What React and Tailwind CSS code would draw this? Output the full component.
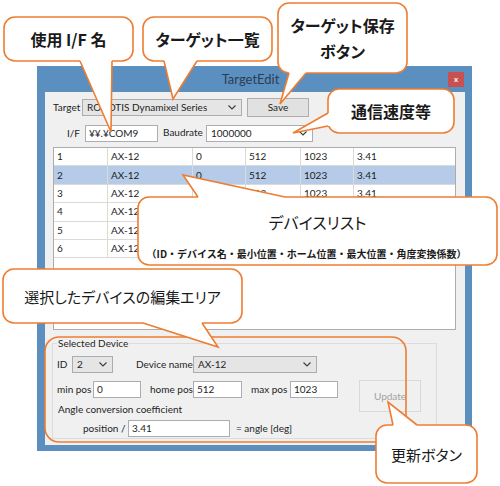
const ORANGE = "#ed7d31";

// callout boxes drawn over the window; tails point at the control
const callouts = [
  { x: 4, y: 17, w: 129, h: 44, b1: [80, 61], b2: [112, 61], tip: [111, 132], dir: [0, -1] },
  { x: 143, y: 17, w: 129, h: 44, b1: [164, 61], b2: [197, 61], tip: [173, 99], dir: [0, -1] },
  { x: 278, y: 3, w: 129, h: 70, b1: [289, 73], b2: [306, 73], tip: [280, 104], dir: [0, -1] },
  { x: 328, y: 89, w: 126, h: 44, b1: [328, 113], b2: [328, 126], tip: [293, 133], dir: [1, 0] },
  { x: 138, y: 197, w: 359, h: 68, b1: [198, 197], b2: [285, 197], tip: [183, 175], dir: [0, 1] },
  { x: 3, y: 269, w: 239, h: 54, b1: [143, 323], b2: [202, 323], tip: [218, 347], dir: [0, -1] },
  { x: 376, y: 425, w: 101, h: 58, b1: [393, 425], b2: [417, 425], tip: [388, 402], dir: [0, 1] },
];

function Chevron() {
  return (
    <svg width="8" height="5" viewBox="0 0 8 5" className="shrink-0">
      <path d="M0.5 0.5 L4 4 L7.5 0.5" fill="none" stroke="#3c3c3c" strokeWidth="1.1" />
    </svg>
  );
}

function Combo({ className, value, editable }) {
  return (
    <div
      className={
        "flex items-center justify-between h-[17px] border pl-[4px] pr-[5px] " +
        (editable ? "bg-white border-[#abadb3] " : "bg-[#e5e5e5] border-[#acacac] ") +
        className
      }
    >
      <span className="whitespace-nowrap overflow-hidden">{value}</span>
      <Chevron />
    </div>
  );
}

function Field({ className, value }) {
  return (
    <div className={"flex items-center h-[17px] bg-white border border-[#abadb3] pl-[3px] " + className}>
      {value}
    </div>
  );
}

const rows = [1, 2, 3, 4, 5, 6];

function DeviceTable() {
  return (
    <div className="mt-[5px] w-[403px] h-[183px] bg-white border border-[#adadad]">
      {rows.map((id) => (
        <div
          key={id}
          className={
            "flex h-[18.4px] border-b border-[#dadada] " + (id === 2 ? "bg-[#b5cbe8]" : "")
          }
        >
          <div className="w-[54px] pl-[3px] border-r border-[#dadada] flex items-center">{id}</div>
          <div className="w-[85px] pl-[3px] border-r border-[#dadada] flex items-center">AX-12</div>
          <div className="w-[53px] pl-[3px] border-r border-[#dadada] flex items-center">0</div>
          <div className="w-[55px] pl-[3px] border-r border-[#dadada] flex items-center">512</div>
          <div className="w-[53px] pl-[3px] border-r border-[#dadada] flex items-center">1023</div>
          <div className="flex-1 pl-[3px] flex items-center">3.41</div>
        </div>
      ))}
    </div>
  );
}

function Window() {
  return (
    <div className="w-[435px] h-[385px] bg-[#5b8fbf] flex flex-col">
      {/* title bar */}
      <div className="h-[26px] flex items-center">
        <div className="flex-1" />
        <div className="text-[13px] text-[#2b3d52]">TargetEdit</div>
        <div className="flex-1 flex justify-end pr-[8px]">
          <div className="w-[16px] h-[15px] bg-[#c75050] flex items-center justify-center text-white text-[8px] font-bold leading-none">
            x
          </div>
        </div>
      </div>

      <div className="ml-[8px] mr-[7px] mb-[6px] flex-1 bg-[#f0f0f0] pl-[8px] pt-[6px]">
        <div className="flex items-center h-[19px]">
          <span className="w-[29px]">Target</span>
          <Combo className="w-[160px]" value="ROBOTIS Dynamixel Series" />
          <div className="ml-[5px] w-[62px] h-[19px] bg-[#e1e1e1] border border-[#adadad] flex items-center justify-center">
            Save
          </div>
        </div>

        <div className="flex items-center h-[17px] mt-[8px]">
          <span className="w-[32px] text-right pr-[5px]">I/F</span>
          <Field className="w-[73px]" value="¥¥.¥COM9" />
          <span className="ml-[5px] w-[43px] -mt-[3px]">Baudrate</span>
          <Combo className="w-[107px]" value="1000000" editable />
        </div>

        <DeviceTable />

        <fieldset className="mt-[7px] -ml-[1px] w-[385px] border border-[#dcdcdc] pl-[4px] pb-[1px]">
          <legend className="px-[1px]">Selected Device</legend>
          <div className="flex items-center h-[17px] mt-[6px]">
            <span className="w-[15px]">ID</span>
            <Combo className="w-[41px]" value="2" />
            <span className="ml-[23px] w-[57px]">Device name</span>
            <Combo className="w-[124px]" value="AX-12" />
          </div>
          <div className="flex items-start mt-[8px]">
            <div className="flex flex-col">
              <div className="flex items-center h-[17px]">
                <span className="w-[36px]">min pos</span>
                <Field className="w-[48px]" value="0" />
                <span className="ml-[9px] w-[43px]">home pos</span>
                <Field className="w-[49px]" value="512" />
                <span className="ml-[9px] w-[39px]">max pos</span>
                <Field className="w-[48px]" value="1023" />
              </div>
              <div className="mt-[4px] leading-[14px] pl-[1px]">Angle conversion coefficient</div>
            </div>
            <div className="ml-[21px] -mt-[1px] w-[62px] h-[32px] border border-[#d9d9d9] bg-[#f0f0f0] flex items-center justify-center text-[#a3a3a3]">
              Update
            </div>
          </div>
          <div className="flex items-center h-[17px] mt-[4px]">
            <span className="ml-[26px] w-[45px]">position /</span>
            <Field className="w-[102px]" value="3.41" />
            <span className="ml-[6px]">= angle [deg]</span>
          </div>
        </fieldset>
      </div>
    </div>
  );
}

function CalloutShapes() {
  return (
    <svg className="absolute inset-0 pointer-events-none" width="500" height="486" viewBox="0 0 500 486">
      {/* highlight of the edit area */}
      <rect x="45" y="337" width="361" height="105" rx="14" fill="none" stroke={ORANGE} strokeWidth="1.6" />
      {callouts.map((c, i) => {
        const [dx, dy] = c.dir;
        const cover = [
          [c.b1[0] + dx * 3, c.b1[1] + dy * 3],
          c.b1,
          c.tip,
          c.b2,
          [c.b2[0] + dx * 3, c.b2[1] + dy * 3],
        ]
          .map((p) => p.join(","))
          .join(" ");
        return (
          <g key={i}>
            <rect x={c.x} y={c.y} width={c.w} height={c.h} rx="11" fill="white" stroke={ORANGE} strokeWidth="1.6" />
            <polygon points={cover} fill="white" />
            <polyline
              points={[c.b1, c.tip, c.b2].map((p) => p.join(",")).join(" ")}
              fill="none"
              stroke={ORANGE}
              strokeWidth="1.6"
              strokeLinejoin="miter"
            />
          </g>
        );
      })}
    </svg>
  );
}

function CalloutTexts() {
  const jp = "absolute flex flex-col items-center justify-center font-['Noto_Sans_CJK_JP',sans-serif] text-[#1a1a1a] [font-feature-settings:'palt'] whitespace-nowrap";
  return (
    <>
      <div className={jp + " left-[4px] top-[17px] w-[129px] h-[44px] text-[16px] font-bold"}>使用 I/F 名</div>
      <div className={jp + " left-[143px] top-[17px] w-[129px] h-[44px] text-[16px] font-bold"}>ターゲット一覧</div>
      <div className={jp + " left-[278px] top-[3px] w-[129px] h-[70px] text-[16px] font-bold leading-[26px]"}>
        <span>ターゲット保存</span>
        <span>ボタン</span>
      </div>
      <div className={jp + " left-[328px] top-[89px] w-[126px] h-[44px] text-[16px] font-bold"}>通信速度等</div>
      <div className={jp + " left-[138px] top-[197px] w-[359px] h-[68px] justify-start! pt-[14px]"}>
        <span className="text-[16px] leading-[22px]">デバイスリスト</span>
        <span className="mt-[15px] pr-[22px] text-[10px] leading-[12px] font-bold [font-feature-settings:normal]">
          （ID・デバイス名・最小位置・ホーム位置・最大位置・角度変換係数）
        </span>
      </div>
      <div className={jp + " left-[3px] top-[269px] w-[239px] h-[54px] text-[15px]"}>選択したデバイスの編集エリア</div>
      <div className={jp + " left-[376px] top-[425px] w-[101px] h-[58px] text-[15px]"}>更新ボタン</div>
    </>
  );
}

export default function App() {
  return (
    <div className="relative w-[500px] h-[486px] bg-white overflow-hidden font-['Lato',sans-serif] text-[10px] leading-[13px] text-[#1e1e1e]">
      <div className="pt-[66px] pl-[37px]">
        <Window />
      </div>
      <CalloutShapes />
      <CalloutTexts />
    </div>
  );
}
